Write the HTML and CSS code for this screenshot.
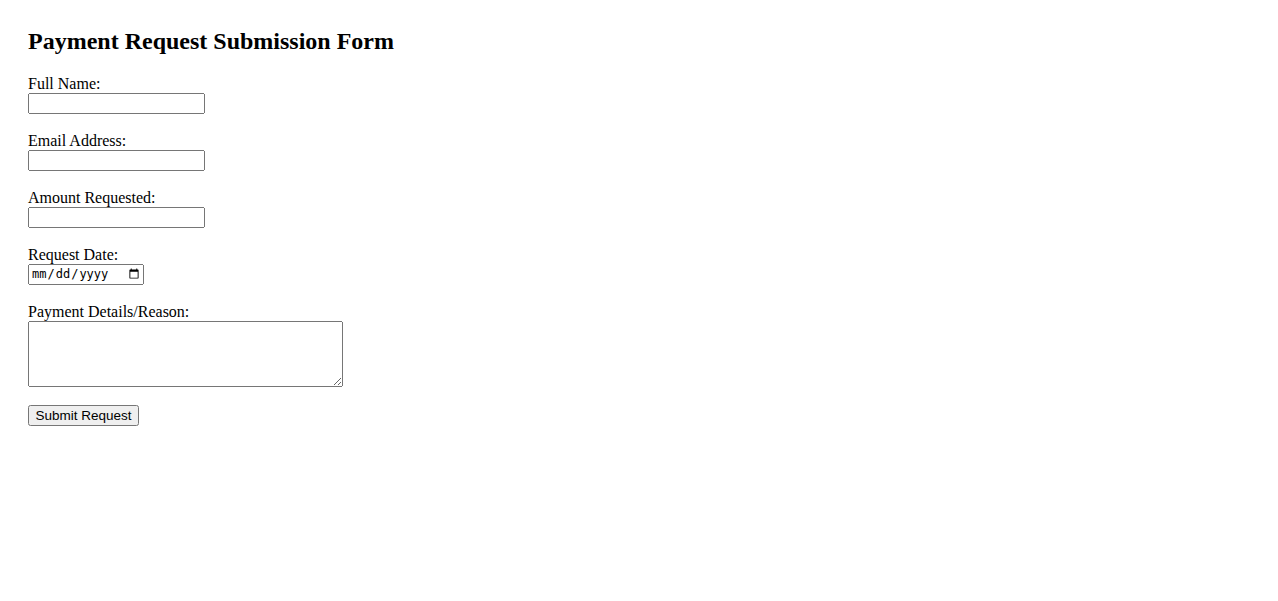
FILE: index.html
```html
<!DOCTYPE html>
<html>
<head>
<meta charset="utf-8">
<title>Payment Request Submission Form</title>
<link rel="stylesheet" href="styles.css">
</head>
<body>
<h2 class="title">Payment Request Submission Form</h2>
<form class="form">
<label for="name">Full Name:</label><br>
<input type="text" id="name" class="field"><br><br>
<label for="email">Email Address:</label><br>
<input type="email" id="email" class="field"><br><br>
<label for="amount">Amount Requested:</label><br>
<input type="number" id="amount" class="field"><br><br>
<label for="date">Request Date:</label><br>
<input type="date" id="date" class="date"><br><br>
<label for="details">Payment Details/Reason:</label><br>
<textarea id="details" class="details" rows="4" cols="40"></textarea><br><br>
<button type="submit" class="submit">Submit Request</button>
</form>
</body>
</html>
```

FILE: styles.css
```css
body {
  margin: 8px;
  padding: 20px;
  font-family: "Liberation Serif", "Times New Roman", serif;
  font-size: 16px;
}
.title {
  margin-top: 0;
}
.field {
  width: 177px;
  box-sizing: border-box;
}
.date {
  width: 116px;
  height: 21px;
  box-sizing: border-box;
  font-size: 12px;
}
.details {
  width: 315px;
  height: 66px;
  box-sizing: border-box;
    vertical-align: top;
}
.submit {
  width: 111px;
  height: 21px;
  box-sizing: border-box;
  padding: 1px 4px;
  font-family: "Liberation Sans", Arial, sans-serif;
  font-size: 13.5px;
  white-space: nowrap;
}
```
